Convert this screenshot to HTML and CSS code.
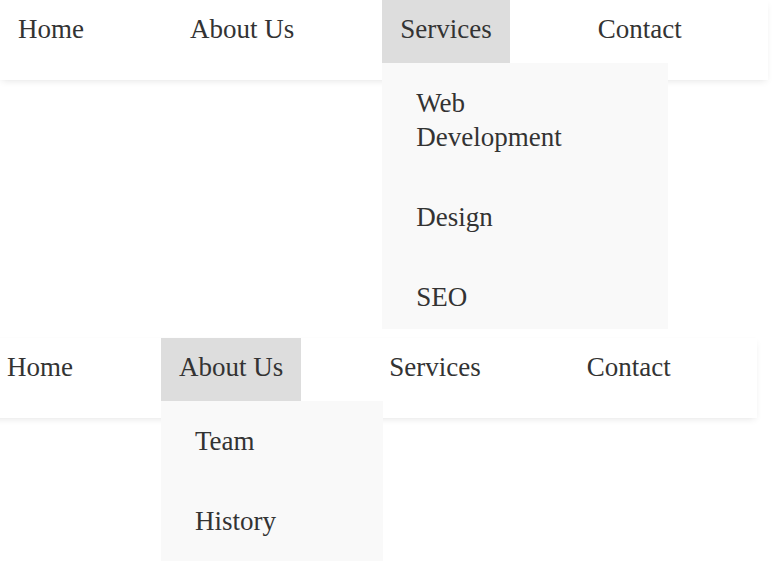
FILE: index.html
```html
<!DOCTYPE html>
<html lang="en">
<head>
<meta charset="utf-8">
<title>Navigation menus</title>
<link rel="stylesheet" href="styles.css">
</head>
<body>
<div class="demo demo--first">
  <nav class="navbar">
    <ul class="nav-list">
      <li class="nav-item"><a class="nav-link" href="#">Home</a></li>
      <li class="nav-item"><a class="nav-link" href="#">About Us</a></li>
      <li class="nav-item nav-item--open">
        <a class="nav-link" href="#">Services</a>
        <ul class="dropdown dropdown--services">
          <li><a class="dropdown-link" href="#">Web Development</a></li>
          <li><a class="dropdown-link" href="#">Design</a></li>
          <li><a class="dropdown-link" href="#">SEO</a></li>
        </ul>
      </li>
      <li class="nav-item"><a class="nav-link" href="#">Contact</a></li>
    </ul>
  </nav>
</div>
<div class="demo demo--second">
  <nav class="navbar navbar--shifted">
    <ul class="nav-list">
      <li class="nav-item"><a class="nav-link" href="#">Home</a></li>
      <li class="nav-item nav-item--open">
        <a class="nav-link" href="#">About Us</a>
        <ul class="dropdown dropdown--about">
          <li><a class="dropdown-link" href="#">Team</a></li>
          <li><a class="dropdown-link" href="#">History</a></li>
        </ul>
      </li>
      <li class="nav-item"><a class="nav-link" href="#">Services</a></li>
      <li class="nav-item"><a class="nav-link" href="#">Contact</a></li>
    </ul>
  </nav>
</div>
</body>
</html>
```
FILE: styles.css
```css
html, body {
  margin: 0;
  padding: 0;
  background: #ffffff;
}

body {
  font-family: "Liberation Serif", "Times New Roman", serif;
  font-size: 27px;
  color: #333333;
}

.demo--first {
  height: 338px;
}

.demo--second {
  height: 236px;
}

.navbar {
  width: 768px;
  height: 80px;
  background: #ffffff;
  box-shadow: 0 3px 7px -2px rgba(0, 0, 0, 0.1), -1px 0 1px rgba(0, 0, 0, 0.04);
}

.navbar--shifted {
  margin-left: -11px;
}

.nav-list {
  list-style: none;
  margin: 0;
  padding: 0;
  display: flex;
  gap: 70px;
}

.nav-item {
  position: relative;
}

.nav-link {
  display: block;
  padding: 14px 18px 18px;
  color: #333333;
  text-decoration: none;
}

.nav-item--open > .nav-link {
  background: #dddddd;
}

.dropdown {
  position: absolute;
  top: 100%;
  left: 0;
  list-style: none;
  margin: 0;
  padding: 0;
  background: #f9f9f9;
  z-index: 2;
}

.dropdown--services {
  width: 286px;
  height: 266px;
  overflow: hidden;
}

.dropdown--about {
  width: 222px;
}

.dropdown-link {
  display: block;
  padding: 23px 34px;
  line-height: 34px;
  color: #333333;
  text-decoration: none;
}

.dropdown--services .dropdown-link {
  padding-right: 90px;
}
```
